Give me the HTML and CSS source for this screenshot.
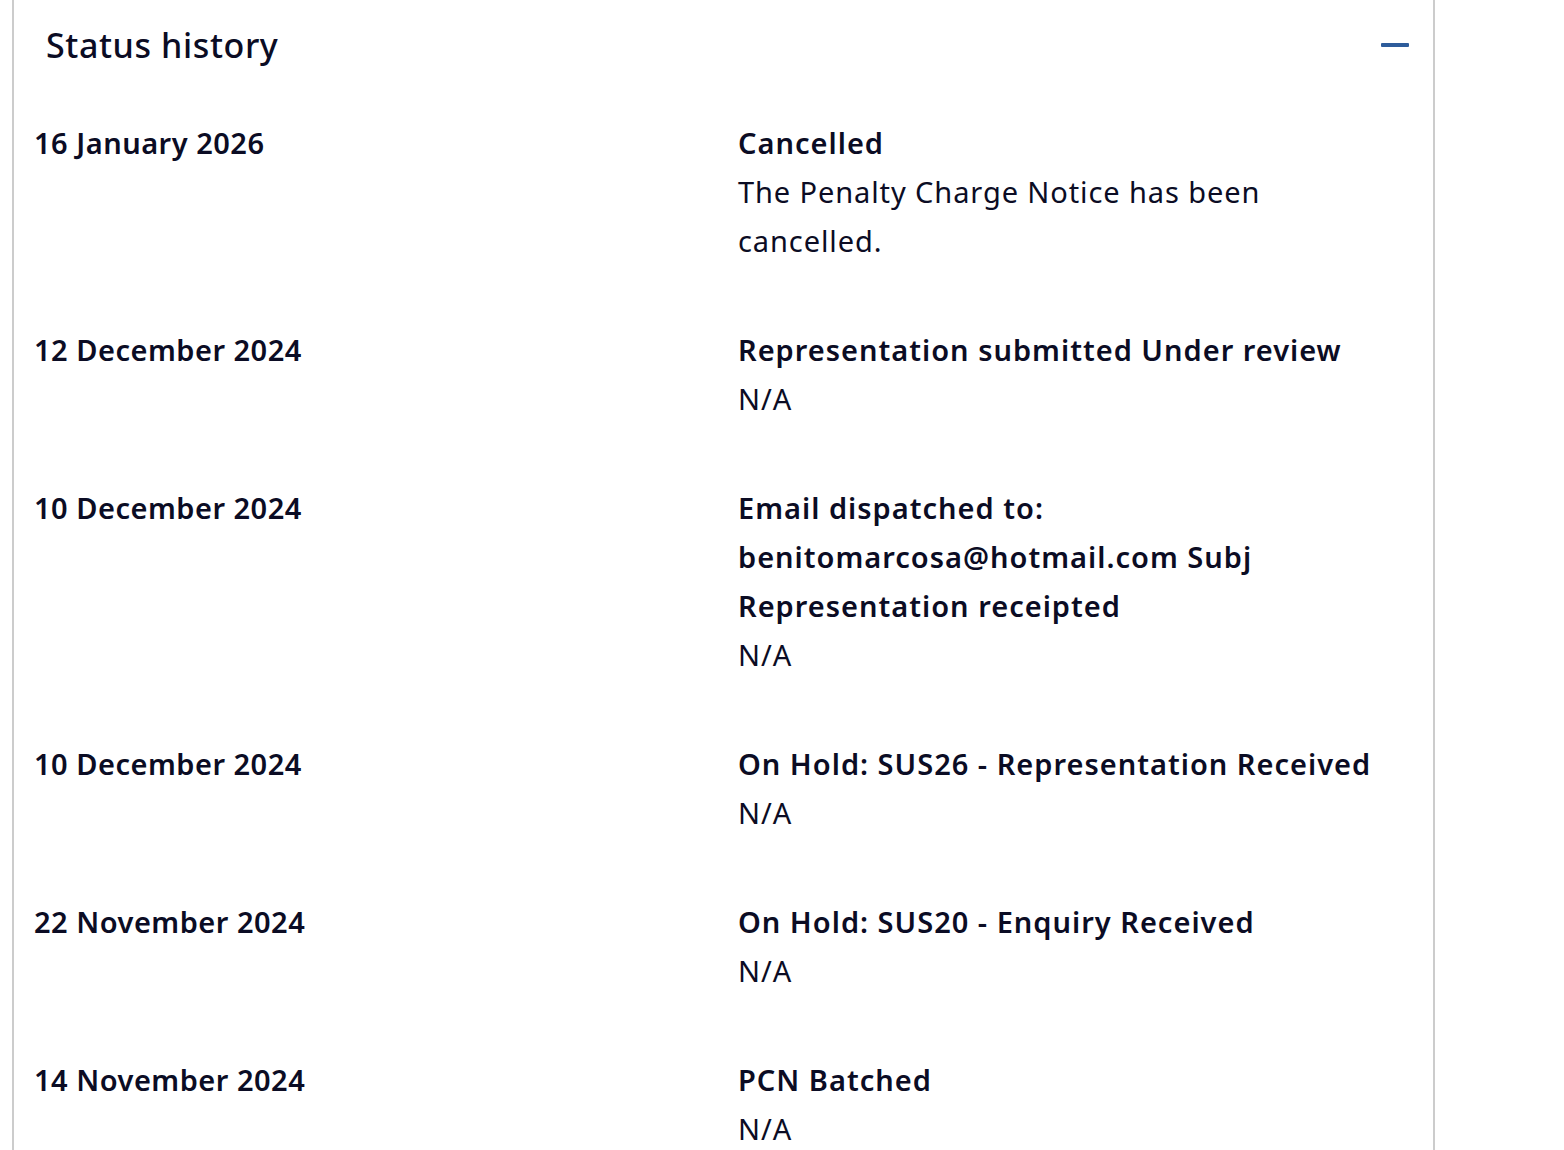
FILE: index.html
```html
<!DOCTYPE html>
<html lang="en">
<head>
<meta charset="utf-8">
<title>Status history</title>
<link rel="stylesheet" href="styles.css">
</head>
<body>
<section class="panel">
  <div class="panel-head">
    <h2 class="panel-title">Status history</h2>
    <span class="collapse-icon" aria-label="Collapse"></span>
  </div>
  <div class="history">
    <div class="entry">
      <div class="date">16 January 2026</div>
      <div class="detail">
        <div class="status">Cancelled</div>
        <div class="note">The Penalty Charge Notice has been cancelled.</div>
      </div>
    </div>
    <div class="entry">
      <div class="date">12 December 2024</div>
      <div class="detail">
        <div class="status">Representation submitted Under review</div>
        <div class="note">N/A</div>
      </div>
    </div>
    <div class="entry">
      <div class="date">10 December 2024</div>
      <div class="detail">
        <div class="status">Email dispatched to: benitomarcosa@hotmail.com Subj Representation receipted</div>
        <div class="note">N/A</div>
      </div>
    </div>
    <div class="entry">
      <div class="date">10 December 2024</div>
      <div class="detail">
        <div class="status">On Hold: SUS26 - Representation Received</div>
        <div class="note">N/A</div>
      </div>
    </div>
    <div class="entry">
      <div class="date">22 November 2024</div>
      <div class="detail">
        <div class="status">On Hold: SUS20 - Enquiry Received</div>
        <div class="note">N/A</div>
      </div>
    </div>
    <div class="entry">
      <div class="date">14 November 2024</div>
      <div class="detail">
        <div class="status">PCN Batched</div>
        <div class="note">N/A</div>
      </div>
    </div>
  </div>
</section>
</body>
</html>
```

FILE: styles.css
```css
html, body {
  margin: 0;
  padding: 0;
  background: #ffffff;
}

body {
  font-family: "Noto Sans", "Open Sans", Arial, sans-serif;
  color: #0b0c24;
  overflow: hidden;
  height: 1150px;
}

.panel {
  margin-left: 12px;
  width: 1419px;
  border-left: 2px solid #cccccc;
  border-right: 2px solid #cccccc;
  min-height: 1150px;
  box-sizing: content-box;
}

.panel-head {
  display: flex;
  align-items: center;
  justify-content: space-between;
  padding: 25px 24px 0 32px;
  height: 40px;
}

.panel-title {
  margin: 0;
  font-size: 34px;
  line-height: 40px;
  font-weight: 500;
  letter-spacing: 0.6px;
}

.collapse-icon {
  display: block;
  width: 28px;
  height: 4px;
  background: #2e5c9b;
  border-radius: 1px;
}

.history {
  display: flex;
  flex-direction: column;
  gap: 60px;
  padding: 53px 20px 0 20px;
}

.entry {
  display: grid;
  grid-template-columns: 704px 1fr;
  font-size: 29px;
  line-height: 49px;
}

.date {
  font-weight: 600;
  letter-spacing: 0.5px;
}

.detail {
  max-width: 660px;
}

.status {
  font-weight: 600;
  letter-spacing: 1px;
}

.note {
  font-weight: 400;
  letter-spacing: 0.9px;
}
```
